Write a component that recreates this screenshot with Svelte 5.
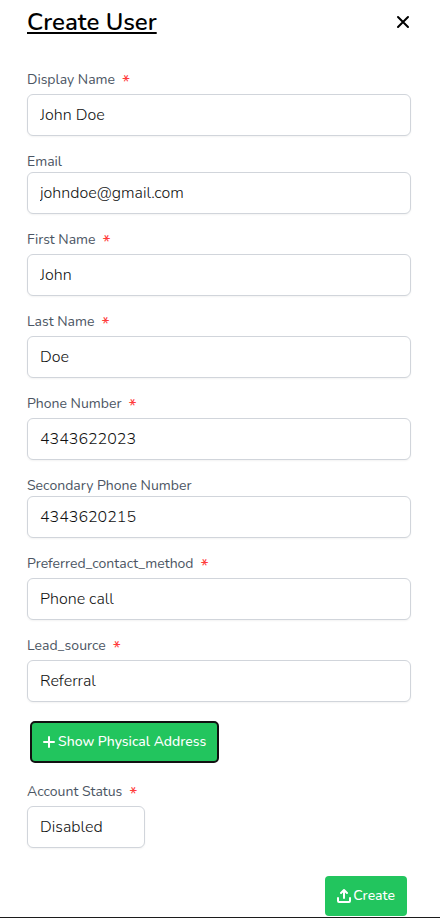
<script>
	let showAddress = $state(false);

	let fields = $state([
		{ id: 'display_name', label: 'Display Name', type: 'text', required: true, value: 'John Doe' },
		{ id: 'email', label: 'Email', type: 'email', required: false, value: 'johndoe@gmail.com' },
		{ id: 'first_name', label: 'First Name', type: 'text', required: true, value: 'John' },
		{ id: 'last_name', label: 'Last Name', type: 'text', required: true, value: 'Doe' },
		{ id: 'phone', label: 'Phone Number', type: 'tel', required: true, value: '4343622023' },
		{ id: 'secondary_phone', label: 'Secondary Phone Number', type: 'tel', required: false, value: '4343620215' },
		{ id: 'contact_method', label: 'Preferred_contact_method', options: ['Phone call', 'Email', 'Text'], required: true, value: 'Phone call' },
		{ id: 'lead_source', label: 'Lead_source', options: ['Referral', 'Website', 'Other'], required: true, value: 'Referral' }
	]);

	let status = $state('Disabled');
</script>

<main class="modal">
	<header class="header">
		<h1>Create User</h1>
		<button type="button" class="close" aria-label="Close">
			<svg viewBox="0 0 14 14" width="14" height="14">
				<path d="M2 2l10 10M12 2L2 12" />
			</svg>
		</button>
	</header>

	<form onsubmit={(e) => e.preventDefault()}>
		<div class="fields">
			{#each fields as field (field.id)}
				<div class="field">
					<label for={field.id} class:required={field.required}>{field.label}</label>
					{#if field.options}
						<select id={field.id} bind:value={field.value}>
							{#each field.options as option}
								<option>{option}</option>
							{/each}
						</select>
					{:else}
						<input id={field.id} type={field.type} bind:value={field.value} />
					{/if}
				</div>
			{/each}
		</div>

		<button type="button" class="btn address" onclick={() => (showAddress = !showAddress)}>
			<svg viewBox="0 0 12 12" width="12" height="12">
				<path d="M6 1v10M1 6h10" />
			</svg>
			{showAddress ? 'Hide' : 'Show'} Physical Address
		</button>

		<div class="field">
			<label for="status" class="required">Account Status</label>
			<select id="status" class="status" bind:value={status}>
				<option>Disabled</option>
				<option>Enabled</option>
			</select>
		</div>

		<footer class="footer">
			<button type="submit" class="btn">
				<svg viewBox="0 0 14 14" width="14" height="14">
					<path d="M7 9V1M4 4l3-3 3 3M1 9v3q0 1 1 1h10q1 0 1-1V9" />
				</svg>
				Create
			</button>
		</footer>
	</form>
</main>

<style>
	:global(body) {
		background: #fff;
	}

	.modal {
		font-family: Nunito, 'Open Sans', 'Noto Sans', sans-serif;
		color: #000;
		border-bottom: 1px solid #1c1c1c;
	}

	.header {
		display: flex;
		justify-content: space-between;
		align-items: center;
		height: 44px;
		padding: 0 30px 0 27px;
	}

	h1 {
		margin: 0;
		font-size: 24px;
		font-weight: 600;
		line-height: 32px;
		text-decoration: underline;
		text-decoration-thickness: 2px;
		text-underline-offset: 2px;
	}

	svg {
		flex: none;
		fill: none;
		stroke: currentColor;
		stroke-width: 2;
		stroke-linecap: round;
		stroke-linejoin: round;
	}

	.close {
		display: flex;
		padding: 0;
		border: 0;
		background: none;
		color: #000;
		cursor: pointer;
	}

	form {
		padding: 26px 29px 1px 27px;
	}

	.fields {
		display: flex;
		flex-direction: column;
		gap: 16px;
	}

	label {
		display: block;
		font-size: 14px;
		line-height: 20px;
		color: #4b5563;
	}

	.required {
		padding-bottom: 4px;
	}

	.required::after {
		content: '*';
		margin-left: 7px;
		color: #ff3b3b;
		font-size: 18px;
		line-height: 0;
		vertical-align: -4px;
	}

	input,
	select {
		display: block;
		box-sizing: border-box;
		width: 100%;
		height: 42px;
		padding: 0 12px;
		border: 1px solid #d1d5db;
		border-radius: 6px;
		background: #fff;
		box-shadow: 0 1px 2px rgba(0, 0, 0, 0.05);
		color: #111;
		font-family: inherit;
		font-size: 16px;
		font-weight: 300;
		line-height: 24px;
		appearance: none;
	}

	.status {
		width: 118px;
	}

	.btn {
		display: flex;
		align-items: center;
		justify-content: center;
		gap: 2px;
		height: 40px;
		padding: 0 12px;
		border: 0;
		border-radius: 4px;
		background: #22c55e;
		color: #fff;
		font-family: inherit;
		font-size: 14px;
		font-weight: 500;
		line-height: 20px;
		cursor: pointer;
	}

	.address {
		gap: 3px;
		height: 42px;
		margin: 19px 3px;
		padding: 0 11px;
		border: 2px solid #111;
		border-radius: 5px;
	}

	.footer {
		display: flex;
		justify-content: flex-end;
		padding: 28px 4px 0;
	}
</style>
